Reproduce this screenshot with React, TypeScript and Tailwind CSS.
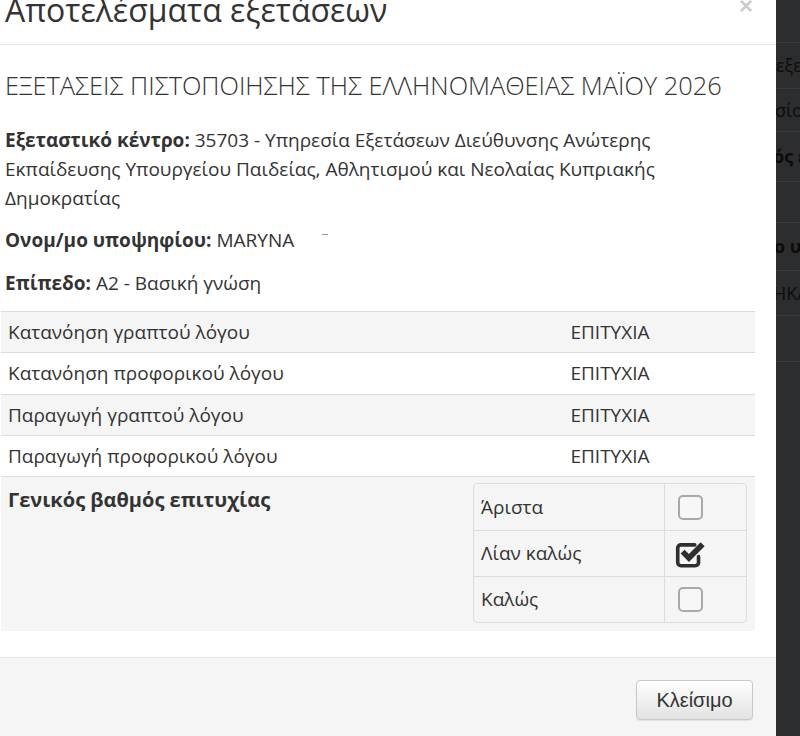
import { ReactNode } from "react";

type Subject = { name: string; result: string; h: string };

const subjects: Subject[] = [
  { name: "Κατανόηση γραπτού λόγου", result: "ΕΠΙΤΥΧΙΑ", h: "h-[41px]" },
  { name: "Κατανόηση προφορικού λόγου", result: "ΕΠΙΤΥΧΙΑ", h: "h-[42px]" },
  { name: "Παραγωγή γραπτού λόγου", result: "ΕΠΙΤΥΧΙΑ", h: "h-[41px]" },
  { name: "Παραγωγή προφορικού λόγου", result: "ΕΠΙΤΥΧΙΑ", h: "h-[41px]" },
];

const grades = [
  { label: "Άριστα", checked: false },
  { label: "Λίαν καλώς", checked: true },
  { label: "Καλώς", checked: false },
];

function EmptyBox() {
  return <span className="ml-[13px] block h-[25px] w-[25px] rounded-[5px] border-2 border-[#a9a9a9] bg-[#f7f7f7]" />;
}

// check-square-o style: open square with a chunky tick
function CheckedBox() {
  return (
    <svg width="32" height="30" viewBox="0 0 30 28" className="ml-[9px]">
      <path
        d="M19.5 5.5H6.5a3 3 0 0 0-3 3v13.5a3 3 0 0 0 3 3H20a3 3 0 0 0 3-3v-5.5"
        fill="none"
        stroke="#2f2f2f"
        strokeWidth="3.4"
        strokeLinecap="round"
      />
      <path d="M6.2 13.6 9.9 9.9l4.1 4.1L25 3l3.7 3.7L14 21.4z" fill="#2f2f2f" />
    </svg>
  );
}

function Label({ children }: { children: ReactNode }) {
  return <span className="font-bold">{children}</span>;
}

// rows of the page behind the backdrop
const backRows = [
  { h: "h-[43px]", text: "", cls: "" },
  { h: "h-[46px]", text: "εξετάσεις", cls: "" },
  { h: "h-[43px]", text: "σίου", cls: "-ml-[1px]" },
  { h: "h-[50px]", text: "ός επ", cls: "-ml-[3px] font-bold" },
  { h: "h-[41px]", text: "", cls: "" },
  { h: "h-[48px]", text: "ο υπ", cls: "-ml-[2px] font-bold" },
  { h: "h-[45px]", text: "ΗΚΑ", cls: "-ml-[3px]" },
  { h: "h-[46px]", text: "", cls: "" },
];

export default function App() {
  return (
    <div className="flex h-[736px] w-[800px] overflow-hidden font-['Open_Sans',sans-serif] text-[#333]">
      <div className="flex h-full w-[776px] shrink-0 flex-col bg-white">
        <div className="flex h-[45px] shrink-0 items-start justify-between border-b border-[#e5e5e5] pl-[5px] pr-[23px]">
          <h4 className="-mt-[6px] text-[32px] leading-none font-normal">Αποτελέσματα εξετάσεων</h4>
          <button className="-mt-[6px] font-['Liberation_Sans',sans-serif] text-[24px] leading-none font-bold text-black opacity-20">
            ×
          </button>
        </div>

        <div className="flex flex-col pt-[27px] pl-[1px] pr-[21px] text-[19px] leading-[29px]">
          <h4 className="pl-[4px] text-[25.4px] leading-[26px] font-light">
            ΕΞΕΤΑΣΕΙΣ ΠΙΣΤΟΠΟΙΗΣΗΣ ΤΗΣ ΕΛΛΗΝΟΜΑΘΕΙΑΣ ΜΑΪΟΥ 2026
          </h4>
          <p className="mt-[28px] pl-[4px] pr-[90px]">
            <Label>Εξεταστικό κέντρο:</Label> 35703 - Υπηρεσία Εξετάσεων Διεύθυνσης Ανώτερης Εκπαίδευσης Υπουργείου
            Παιδείας, Αθλητισμού και Νεολαίας Κυπριακής Δημοκρατίας
          </p>
          <p className="mt-[13px] flex items-start pl-[4px]">
            <span>
              <Label>Ονομ/μο υποψηφίου:</Label> MARYNA
            </span>
            <span className="mt-[8px] ml-[28px] h-[1px] w-[6px] bg-[#999]" />
          </p>
          <p className="mt-[14px] pl-[4px]">
            <Label>Επίπεδο:</Label> A2 - Βασική γνώση
          </p>

          <div className="mt-[13px] flex flex-col">
            {subjects.map((s, i) => (
              <div
                key={s.name}
                className={`flex ${s.h} items-center border-t border-[#ddd] ${i % 2 === 0 ? "bg-[#f5f5f5]" : "bg-white"}`}
              >
                <div className="w-[464px] pl-[7px]">{s.name}</div>
                <div className="flex-1 text-center">{s.result}</div>
              </div>
            ))}
            <div className="flex items-start border-t border-[#ddd] bg-[#f5f5f5]">
              <div className="w-[464px] pt-[8px] pl-[7px] text-[20px] font-bold">Γενικός βαθμός επιτυχίας</div>
              <div className="flex-1 px-[8px] pt-[6px] pb-[8px]">
                <div className="flex flex-col overflow-hidden rounded-[4px] border border-[#ddd]">
                  {grades.map((g, i) => (
                    <div key={g.label} className={`flex h-[46px] ${i > 0 ? "border-t border-[#ddd]" : ""}`}>
                      <div className="flex flex-1 items-center pl-[7px]">{g.label}</div>
                      <div className="flex w-[82px] items-center border-l border-[#ddd]">
                        {g.checked ? <CheckedBox /> : <EmptyBox />}
                      </div>
                    </div>
                  ))}
                </div>
              </div>
            </div>
          </div>
        </div>

        <div className="mt-[26px] flex flex-1 justify-end border-t border-[#e5e5e5] bg-[#f5f5f5] pt-[22px] pr-[23px]">
          <button className="h-[40px] w-[117px] rounded-[4px] border border-[#c8c8c8] bg-gradient-to-b from-white to-[#e2e2e2] font-['Liberation_Sans',sans-serif] text-[20px] text-[#333] shadow-[0_1px_1px_rgba(0,0,0,0.08)]">
            Κλείσιμο
          </button>
        </div>
      </div>

      <div className="flex flex-1 flex-col overflow-hidden bg-[#2c2d2e] text-[18px] whitespace-nowrap text-[#0c0c0c]">
        {backRows.map((r, i) => (
          <div key={i} className={`flex ${r.h} shrink-0 items-center border-b border-[#38393a]`}>
            <span className={r.cls}>{r.text}</span>
          </div>
        ))}
      </div>
    </div>
  );
}
